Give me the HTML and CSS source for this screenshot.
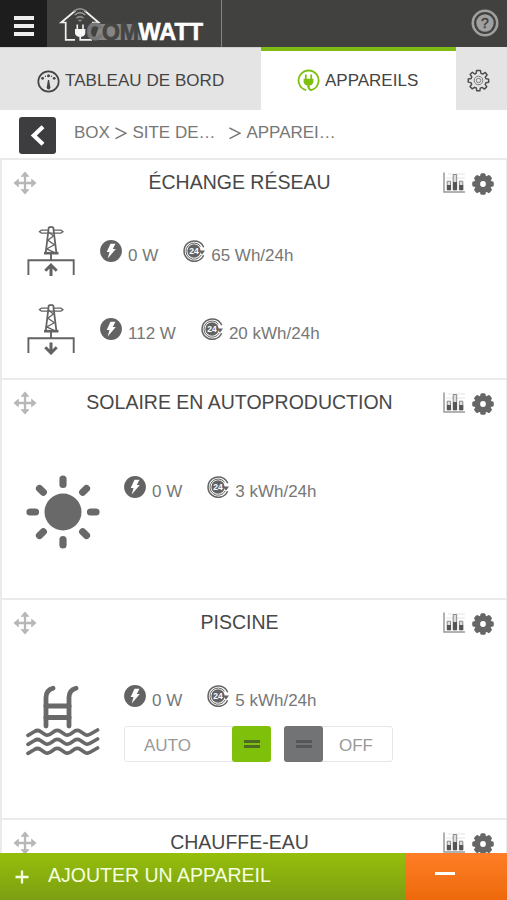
FILE: index.html
```html
<!DOCTYPE html>
<html lang="fr">
<head>
<meta charset="utf-8">
<title>Comwatt - Appareils</title>
<link rel="stylesheet" href="styles.css">
</head>
<body>
<svg class="defs" aria-hidden="true">
  <symbol id="move" viewBox="0 0 24 24"><path d="M12 5v14M5 12h14" stroke="currentColor" stroke-width="2.3"/><path d="M12 .8 16 5.5H8zM12 23.2l4-4.7H8zM.8 12l4.700-4v8zM23.200 12l-4.700-4v8z" fill="currentColor" stroke="currentColor" stroke-width=".6"/></symbol>
  <symbol id="chart" viewBox="0 0 24 24"><path d="M6 3h17M4 7h19" stroke="#e3e3e3" stroke-width="1"/><path d="M2 1.500v19.500h21" fill="none" stroke="#999" stroke-width="1.500"/><g fill="#ddd" stroke="#888" stroke-width="1"><path d="M5.200 10.200h3.400v8.800H5.200zM11.200 3.500h3.500v15.500h-3.500zM17.400 10.200h3.400v8.800h-3.400z"/></g><path d="M5 14h4v5H5zM11 11h4v8h-4zM17.200 14h4v5h-4z" fill="#555"/></symbol>
  <symbol id="gear" viewBox="0 0 24 24"><g fill="currentColor"><rect id="tooth" x="9.300" y="1.200" width="5.400" height="21.600" rx="1.600"/><use href="#tooth" transform="rotate(45 12 12)"/><use href="#tooth" transform="rotate(90 12 12)"/><use href="#tooth" transform="rotate(135 12 12)"/><circle cx="12" cy="12" r="8.700"/></g><circle cx="12" cy="12" r="2.900" fill="#fff"/></symbol>
  <symbol id="bolt" viewBox="0 0 22 22"><circle cx="11" cy="11" r="10.900" fill="currentColor"/><path d="M10.500 3.800h5L12.800 9h3L7.700 18.600l1.800-6.700H6.700z" fill="#fff"/></symbol>
  <symbol id="day" viewBox="0 0 22 22"><path d="M20.600 15.200A10.200 10.200 0 1 1 20.700 7.300" fill="none" stroke="currentColor" stroke-width="1.500"/><path d="M18.200 15A8.100 8.100 0 1 1 17.500 6.200" fill="none" stroke="currentColor" stroke-width="1"/><circle cx="11" cy="11" r="6.700" fill="currentColor"/><path d="M16 10.400h6l-3 4.300z" fill="currentColor"/></symbol>
  <symbol id="pylon" viewBox="0 0 48 52"><g fill="none" stroke="currentColor"><path d="M1.400 50V35.300h45.300V50M24 35V28" stroke-width="1.900"/><path d="M21.700 2.200h4.600M21.800 2 18.700 28M26.200 2l3.200 26" stroke-width="1.800"/><path d="m21.600 7 4.800 4-5.500 4.200 6.500 4.500-7.800 4.200 8.700 4" stroke-width="1.300"/><path d="M17 28.200h14.500" stroke-width="2.600"/><path d="M21 5.200h-6.600l-2 1.600 2 1.300H34l2-1.300-2-1.600h-7" stroke-width="1.200"/></g></symbol>
</svg>
<div class="app">
  <header class="topbar">
    <button class="burger" aria-label="Menu"><i></i><i></i><i></i></button>
    <div class="brand">
      <svg width="150" height="40" viewBox="58 4 150 40" aria-label="Comwatt">
        <path d="M100 24h35l6 16H94z" fill="#858585"/>
        <path d="M75 39.800H65.700V22.500h-4.500L75.500 10.500M84.500 10.500 98.600 22.500H92" fill="none" stroke="#f2f2f2" stroke-width="1.700"/>
        <path d="M73.500 11.500q6.500-5.500 13 0M74.700 15q5.300-4.600 10.600 0M76.600 18.200q3.400-3 6.800 0M78.600 21q1.400-1.300 2.800 0" fill="none" stroke="#929292" stroke-width="1.600"/>
        <path d="M77.300 24.500v5M83 24.500v5" stroke="#f2f2f2" stroke-width="1.600"/>
        <path d="M75 29h10.300v3.800q0 3-3.700 4h-3q-3.600-1-3.600-4z" fill="#f5f5f5"/>
        <path d="M80.200 36v3.800H92" fill="none" stroke="#f2f2f2" stroke-width="1.700"/>
        <text x="86.500" y="39.800" class="logo-com-c" textLength="16" lengthAdjust="spacingAndGlyphs">C</text>
        <text x="102" y="39.800" class="logo-com" textLength="37" lengthAdjust="spacingAndGlyphs">OM</text>
        <text x="138.500" y="39.800" class="logo-watt" textLength="64.500" lengthAdjust="spacingAndGlyphs">WATT</text>
      </svg>
    </div>
    <div class="help">
      <svg width="28" height="28" viewBox="0 0 28 28"><circle cx="14" cy="14" r="12.200" fill="none" stroke="#a0a0a0" stroke-width="2.600"/><circle cx="14" cy="14" r="8.700" fill="#a0a0a0"/><text x="14" y="19" text-anchor="middle" class="help-mark">?</text></svg>
    </div>
  </header>
  <nav class="tabs">
    <a class="tab tab-board"><svg width="23" height="23" viewBox="0 0 23 23"><circle cx="11.500" cy="11.500" r="10.200" fill="none" stroke="#444" stroke-width="1.700"/><g fill="#444"><circle cx="5.600" cy="8.300" r="1.400"/><circle cx="11.500" cy="5.800" r="1.500"/><circle cx="17.200" cy="8.300" r="1.400"/><circle cx="8.400" cy="6.300" r=".7"/><circle cx="14.500" cy="6.300" r=".7"/><path d="M10.900 10h1.200l1.300 7.600q-.2 2-1.800 2t-1.900-2z"/></g></svg><span>TABLEAU DE BORD</span></a>
    <a class="tab tab-devices"><svg width="23" height="23" viewBox="0 0 23 23"><path d="M9.200 21.200A10 10 0 1 1 14 21.200Q11.500 20.500 11.500 17" fill="none" stroke="#7fbf10" stroke-width="1.800"/><path d="M8.800 5.500v5M14.200 5.500v5" stroke="#7fbf10" stroke-width="1.800"/><path d="M6.600 9.800h9.800v2.700q-.2 3.200-3.200 4.100H9.800q-3-.9-3.200-4.100z" fill="#7fbf10"/><path d="M11.500 16v3.200" stroke="#7fbf10" stroke-width="2"/></svg><span>APPAREILS</span></a>
    <a class="tab tab-settings" aria-label="Réglages"><svg width="23" height="23" viewBox="0 0 24 24"><path d="M10 1.500h4l.6 3 1.800.8L19 3.600 21 6l-2 2.600.8 1.600 2.800.4v3.200l-2.900.5-.8 1.800 1.800 2.500-2.500 2.400-2.500-1.800-1.800.7-.5 2.800h-3.200l-.5-2.900-1.800-.7L5.400 20.700 3.200 18.400l1.700-2.500-.8-1.700-2.800-.5v-3.200l3-.5.7-1.700L3.200 5.700l2.400-2.300L8 5.200l1.500-.7z" fill="none" stroke="#4c4c4c" stroke-width="1.500" stroke-linejoin="round"/><circle cx="12" cy="12" r="4.500" fill="none" stroke="#777" stroke-width="1"/><circle cx="12" cy="12" r="2.300" fill="none" stroke="#777" stroke-width="1"/></svg></a>
  </nav>
  <div class="crumbs">
    <button class="back" aria-label="Retour"><svg width="37" height="37" viewBox="0 0 37 37"><path d="m24 9.700-9.200 8.700 9.200 8.800" fill="none" stroke="#fff" stroke-width="4.200"/></svg></button>
    <span class="crumb">BOX</span><svg class="sep" width="12" height="13" viewBox="0 0 12 13"><path d="m.5 1 10.500 5.200L.5 11.700"/></svg><span class="crumb crumb-site">SITE DE…</span><svg class="sep" width="12" height="13" viewBox="0 0 12 13"><path d="m.5 1 10.500 5.200L.5 11.700"/></svg><span class="crumb">APPAREI…</span>
  </div>
  <main class="cards">
    <section class="card">
      <div class="card-head"><svg class="move"><use href="#move"/></svg><h2>ÉCHANGE RÉSEAU</h2><svg class="chart"><use href="#chart"/></svg><svg class="gear"><use href="#gear"/></svg></div>
      <div class="flow">
        <svg class="pylon" viewBox="0 0 48 52"><use href="#pylon"/><path d="M24 51V41M18.300 45.700 24 40l5.700 5.700" class="arrow"/></svg>
        <div class="stats"><svg><use href="#bolt"/></svg><span>0 W</span><svg><use href="#day"/><text x="6.200" y="14" class="day-text">24</text></svg><span>65 Wh/24h</span></div>
      </div>
      <div class="flow">
        <svg class="pylon" viewBox="0 0 48 52"><use href="#pylon"/><path d="M24 39.500v10M18.300 44.300 24 50l5.700-5.700" class="arrow"/></svg>
        <div class="stats"><svg><use href="#bolt"/></svg><span>112 W</span><svg><use href="#day"/><text x="6.200" y="14" class="day-text">24</text></svg><span>20 kWh/24h</span></div>
      </div>
    </section>
    <section class="card">
      <div class="card-head"><svg class="move"><use href="#move"/></svg><h2>SOLAIRE EN AUTOPRODUCTION</h2><svg class="chart"><use href="#chart"/></svg><svg class="gear"><use href="#gear"/></svg></div>
      <div class="device device-sun">
        <svg class="picto" viewBox="0 0 74 74"><circle cx="37" cy="37" r="18.500" fill="#696969"/><path d="M37 4v5.500M37 64.500V70M4 37h5.500M64.500 37H70M13.500 13.500l3.800 3.800M56.700 56.700l3.800 3.800M60.500 13.500l-3.800 3.800M17.300 56.700l-3.800 3.800" stroke="#696969" stroke-width="7.200" stroke-linecap="round"/></svg>
        <div class="stats"><svg><use href="#bolt"/></svg><span>0 W</span><svg><use href="#day"/><text x="6.200" y="14" class="day-text">24</text></svg><span>3 kWh/24h</span></div>
      </div>
    </section>
    <section class="card">
      <div class="card-head"><svg class="move"><use href="#move"/></svg><h2>PISCINE</h2><svg class="chart"><use href="#chart"/></svg><svg class="gear"><use href="#gear"/></svg></div>
      <div class="device device-pool">
        <svg class="picto" viewBox="0 0 74 74"><g fill="none" stroke="#696969" stroke-linecap="round" stroke-linejoin="round"><path d="M20 41V12.500Q20 5 27 3.200M43 41V12.500Q43 5 50 3.200" stroke-width="4.800"/><path d="M20 21h23M20 32.500h23" stroke-width="5"/><path id="wave" d="M2 50.300 8.500 46.500Q11.500 44.500 14.500 46.500L19 49.500Q21.500 51 24.500 49L28.500 46.200Q31.500 44.500 34.500 46.500L39 49.500Q41.500 51 44.500 49L48.500 46.200Q51.500 44.500 54.500 46.500L59 49.500Q61.500 51 64.500 49L71.500 45" stroke-width="3.700"/><use href="#wave" y="9"/><use href="#wave" y="18"/></g></svg>
        <div class="panel">
          <div class="stats"><svg><use href="#bolt"/></svg><span>0 W</span><svg><use href="#day"/><text x="6.200" y="14" class="day-text">24</text></svg><span>5 kWh/24h</span></div>
          <div class="toggles">
            <button class="toggle toggle-auto"><span>AUTO</span><b class="grip"><i></i><i></i></b></button>
            <button class="toggle toggle-off"><b class="grip"><i></i><i></i></b><span>OFF</span></button>
          </div>
        </div>
      </div>
    </section>
    <section class="card">
      <div class="card-head"><svg class="move"><use href="#move"/></svg><h2>CHAUFFE-EAU</h2><svg class="chart"><use href="#chart"/></svg><svg class="gear"><use href="#gear"/></svg></div>
    </section>
  </main>
  <footer class="actions">
    <button class="add"><svg width="14" height="14" viewBox="0 0 14 14"><path d="M7 .5v13M.5 7h13" stroke="#f6ffe0" stroke-width="2.300"/></svg><span>AJOUTER UN APPAREIL</span></button>
    <button class="remove" aria-label="Retirer"><i></i></button>
  </footer>
</div>
</body>
</html>
```
FILE: styles.css
```css
* { box-sizing: border-box; }
body { margin: 0; font-family: "Liberation Sans", Arial, sans-serif; color: #444; background: #fff; }
button { border: 0; padding: 0; margin: 0; font: inherit; color: inherit; background: none; }
svg { display: block; flex: none; }
.defs { position: absolute; width: 0; height: 0; }
.app { height: 900px; display: flex; flex-direction: column; overflow: hidden; }

.topbar { flex: none; height: 47px; display: flex; background: #41413f; }
.burger { width: 47px; background: #1d1d1d; display: flex; flex-direction: column; gap: 4px; padding: 16px 0 0 14px; }
.burger i { width: 20px; height: 4px; background: #eee; }
.brand { width: 175px; border-right: 1px solid #858585; padding: 4px 0 0 11px; }
.logo-com, .logo-com-c { font-weight: bold; font-size: 23px; fill: #454543; stroke: #454543; stroke-width: .8; }
.logo-com-c { fill: #777; stroke: #777; }
.logo-watt { font-weight: bold; font-size: 23.500px; fill: #fff; stroke: #fff; stroke-width: .6; }
.help { margin-left: auto; padding: 9px 8px 0 0; }
.help-mark { font-size: 14px; fill: #41413f; stroke: #41413f; stroke-width: .4; }

.tabs { flex: none; height: 63px; display: flex; background: #e4e4e4; font-size: 17px; }
.tab { display: flex; align-items: center; padding-top: 4px; gap: 5px; }
.tab-board { width: 261px; padding: 4px 0 0 37px; border-top: 1px solid #cfcfcf; letter-spacing: .06px; }
.tab-devices { width: 195px; padding: 0 0 0 36px; border-top: 4px solid #7fbb15; background: #fff; }
.tab-settings { padding-left: 11px; }

.crumbs { flex: none; height: 48px; display: flex; align-items: flex-start; padding: 7px 0 0 19px; font-size: 17px; color: #777; }
.back { width: 37px; height: 37px; border-radius: 3px; background: #3d3d3f; margin-right: 18px; }
.crumb { line-height: 20px; padding-top: 6px; }
.crumb-site { width: 96px; }
.sep { margin: 10px 5px 0 5.500px; fill: none; stroke: #777; stroke-width: 1.400; }
.crumb-site + .sep { margin-left: 1px; }

.cards { flex: 1; min-height: 0; overflow: hidden; background: #ebebeb; padding: 2px 1px 0 2px; display: flex; flex-direction: column; gap: 2px; }
.card { flex: none; height: 218px; background: #fff; }
.card-head { display: flex; align-items: center; height: 46px; padding: 0 11px; }
.card-head h2 { flex: 1; margin: 0; text-align: center; font-weight: normal; font-size: 19.500px; line-height: 44px; height: 46px; color: #484848; }
.move { width: 24px; height: 24px; color: #b7b7b7; }
.chart { width: 24px; height: 24px; margin-right: 5px; }
.gear { width: 24px; height: 24px; color: #666; margin-top: 2px; }

.flow { display: flex; align-items: flex-start; padding-left: 25px; gap: 25px; height: 78px; }
.card-head + .flow { margin-top: 19px; }
.pylon { width: 48px; height: 52px; color: #636363; }
.arrow { fill: none; stroke: #636363; stroke-width: 3; }
.flow .stats { padding-top: 15px; }
.stats { display: flex; align-items: flex-start; font-size: 17px; color: #777; }
.stats svg { width: 22px; height: 22px; color: #636363; }
.stats span { line-height: 20px; padding-top: 6px; margin: 0 25px 0 6px; white-space: nowrap; }
.day-text { font-size: 8.500px; font-weight: bold; fill: #fff; }

.device { display: flex; align-items: flex-start; padding-left: 24px; gap: 24px; }
.picto { width: 74px; height: 74px; }
.device-sun { margin-top: 49px; }
.device-sun .stats { margin-top: 1px; }
.device-pool { margin-top: 39px; }
.toggles { display: flex; gap: 13px; margin-top: 15px; }
.toggle { display: flex; height: 36px; border: 1px solid #e6e6e6; border-radius: 3px; color: #999; font-size: 17px; }
.toggle span { line-height: 38px; }
.toggle-auto { width: 147px; justify-content: space-between; padding-left: 19px; }
.toggle-off { width: 109px; gap: 17px; }
.grip { width: 39px; height: 36px; margin: -1px; display: flex; flex-direction: column; align-items: center; justify-content: center; gap: 2px; border-radius: 3px; background: #717374; }
.grip i { width: 16px; height: 3px; background: #55565a; }
.toggle-auto .grip { background: #7fc00b; }
.toggle-auto .grip i { background: #4c6b25; }

.actions { flex: none; height: 47px; display: flex; }
.add { width: 405px; display: flex; align-items: center; padding: 0 0 3px 15px; gap: 19px; font-size: 19.500px; color: #f6ffe0; background: linear-gradient(#95bf0b, #7c9f12); }
.add svg { margin-top: 4px; }
.remove { flex: 1; background: linear-gradient(#ff7e27, #ed690b); padding: 19px 0 0 30px; display: flex; align-items: flex-start; }
.remove i { width: 20px; height: 3px; background: #fff; }
```
